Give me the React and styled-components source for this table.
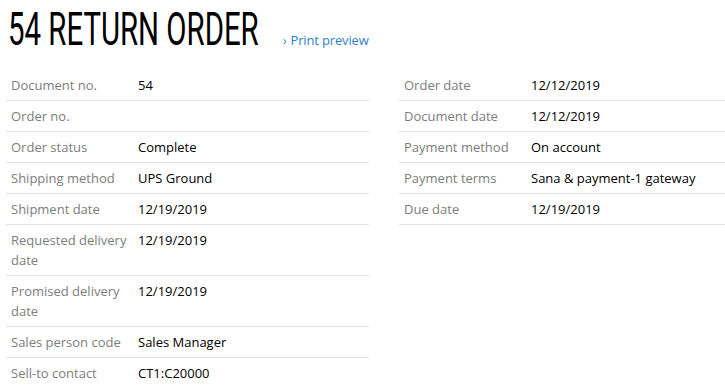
import React, { useLayoutEffect, useRef, useState } from "react";
import styled, { createGlobalStyle } from "styled-components";

const GlobalStyle = createGlobalStyle`
  html, body {
    margin: 0;
    padding: 0;
    background: #fff;
  }
  body {
    font-family: "Open Sans", "Liberation Sans", sans-serif;
    font-size: 13px;
    color: #000;
  }
`;

const Page = styled.div`
  width: 725px;
  height: 388px;
  overflow: hidden;
`;

const Header = styled.div`
  display: flex;
  align-items: baseline;
  padding: 4px 0 0 8px;
  height: 65px;
  box-sizing: border-box;
`;

const Title = styled.h1`
  margin: 0;
  width: 251px;
  font-family: "Roboto", "Liberation Sans", sans-serif;
  font-weight: 400;
  font-size: 46px;
  line-height: 50px;
  white-space: nowrap;
  color: #000;
`;

const TitleText = styled.span`
  display: inline-block;
  transform-origin: 0 50%;
`;

const PrintLink = styled.a`
  margin-left: 24px;
  color: #2f7fcb;
  text-decoration: none;
  font-size: 13px;
  letter-spacing: -0.15px;
  &::before {
    content: "›";
    margin-right: 4px;
    font-size: 12px;
  }
`;

const Columns = styled.div`
  display: grid;
  grid-template-columns: 363px 1fr;
  column-gap: 30px;
  padding-left: 6px;
  margin-top: 5px;
`;

const Table = styled.div`
  display: flex;
  flex-direction: column;
`;

const Row = styled.div`
  display: grid;
  grid-template-columns: 132px 1fr;
  border-bottom: 1px solid #e2e2e2;
  padding: 5px 0;
  line-height: 20px;
`;

const Label = styled.div`
  padding: 0 8px 0 5px;
  color: #7d7d7d;
`;

const Value = styled.div`
  color: #000;
`;

const left = [
  ["Document no.", "54"],
  ["Order no.", ""],
  ["Order status", "Complete"],
  ["Shipping method", "UPS Ground"],
  ["Shipment date", "12/19/2019"],
  ["Requested delivery date", "12/19/2019"],
  ["Promised delivery date", "12/19/2019"],
  ["Sales person code", "Sales Manager"],
  ["Sell-to contact", "CT1:C20000"],
];

const right = [
  ["Order date", "12/12/2019"],
  ["Document date", "12/12/2019"],
  ["Payment method", "On account"],
  ["Payment terms", "Sana & payment-1 gateway"],
  ["Due date", "12/19/2019"],
];

const InfoTable = ({ rows }) => (
  <Table>
    {rows.map(([label, value]) => (
      <Row key={label}>
        <Label>{label}</Label>
        <Value>{value}</Value>
      </Row>
    ))}
  </Table>
);

const FittedTitle = ({ children, width }) => {
  const ref = useRef(null);
  const [scale, setScale] = useState(1);
  useLayoutEffect(() => {
    if (ref.current) {
      const w = ref.current.scrollWidth;
      if (w) setScale(width / w);
    }
  }, [width]);
  return (
    <Title>
      <TitleText ref={ref} style={{ transform: `scaleX(${scale})` }}>
        {children}
      </TitleText>
    </Title>
  );
};

export default function App() {
  return (
    <Page>
      <GlobalStyle />
      <Header>
        <FittedTitle width={251}>54 RETURN ORDER</FittedTitle>
        <PrintLink href="#">Print preview</PrintLink>
      </Header>
      <Columns>
        <InfoTable rows={left} />
        <InfoTable rows={right} />
      </Columns>
    </Page>
  );
}
